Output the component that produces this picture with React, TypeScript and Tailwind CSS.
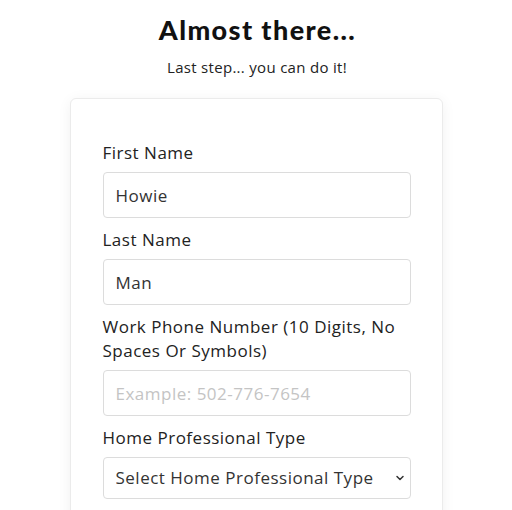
import { ChevronDown } from 'lucide-react';

const fieldClass =
  'h-[46px] w-full rounded-[4px] border border-[#dcdcdc] bg-white px-3 text-[17px] tracking-[0.5px] text-[#333] placeholder:text-[#c4c4c4] outline-none';

const labelClass = 'mb-[7px] text-[17px] leading-6 tracking-[0.5px] text-[#222]';

const Field = ({
  label,
  value,
  placeholder,
}: {
  label: string;
  value?: string;
  placeholder?: string;
}) => (
  <div className="flex flex-col">
    <label className={labelClass}>{label}</label>
    <input
      className={fieldClass}
      defaultValue={value}
      placeholder={placeholder}
    />
  </div>
);

export default function App() {
  return (
    <div
      className="flex h-[510px] flex-col items-center overflow-hidden bg-white"
      style={{ fontFamily: '"Open Sans", "Noto Sans", sans-serif' }}
    >
      <h1
        className="ml-[3px] mt-[14px] text-[27px] font-black leading-8 tracking-[1.4px] text-[#111]"
        style={{ fontFamily: 'Lato, sans-serif' }}
      >
        Almost there...
      </h1>
      <p className="ml-[2px] mt-[11px] text-[15px] leading-5 tracking-[0.3px] text-[#222]">
        Last step... you can do it!
      </p>
      <div className="mt-[21px] w-[373px] shrink-0 rounded-[6px] border border-[#ebebeb] bg-white pb-10 pl-[32px] pr-[31px] pt-[42px] shadow-[0_2px_14px_rgba(0,0,0,0.06)]">
        <div className="flex flex-col gap-[10px]">
          <Field label="First Name" value="Howie" />
          <Field label="Last Name" value="Man" />
          <Field
            label="Work Phone Number (10 Digits, No Spaces Or Symbols)"
            placeholder="Example: 502-776-7654"
          />
          <div className="flex flex-col">
            <label className={labelClass}>Home Professional Type</label>
            <div className="relative">
              <select
                className="h-[42px] w-full appearance-none rounded-[4px] border border-[#dcdcdc] bg-white px-3 text-[17px] tracking-[0.5px] text-[#333] outline-none"
                defaultValue=""
              >
                <option value="">Select Home Professional Type</option>
              </select>
              <ChevronDown
                className="pointer-events-none absolute right-[5px] top-1/2 -translate-y-1/2 text-[#333]"
                size={12}
                strokeWidth={3}
              />
            </div>
          </div>
        </div>
      </div>
    </div>
  );
}
